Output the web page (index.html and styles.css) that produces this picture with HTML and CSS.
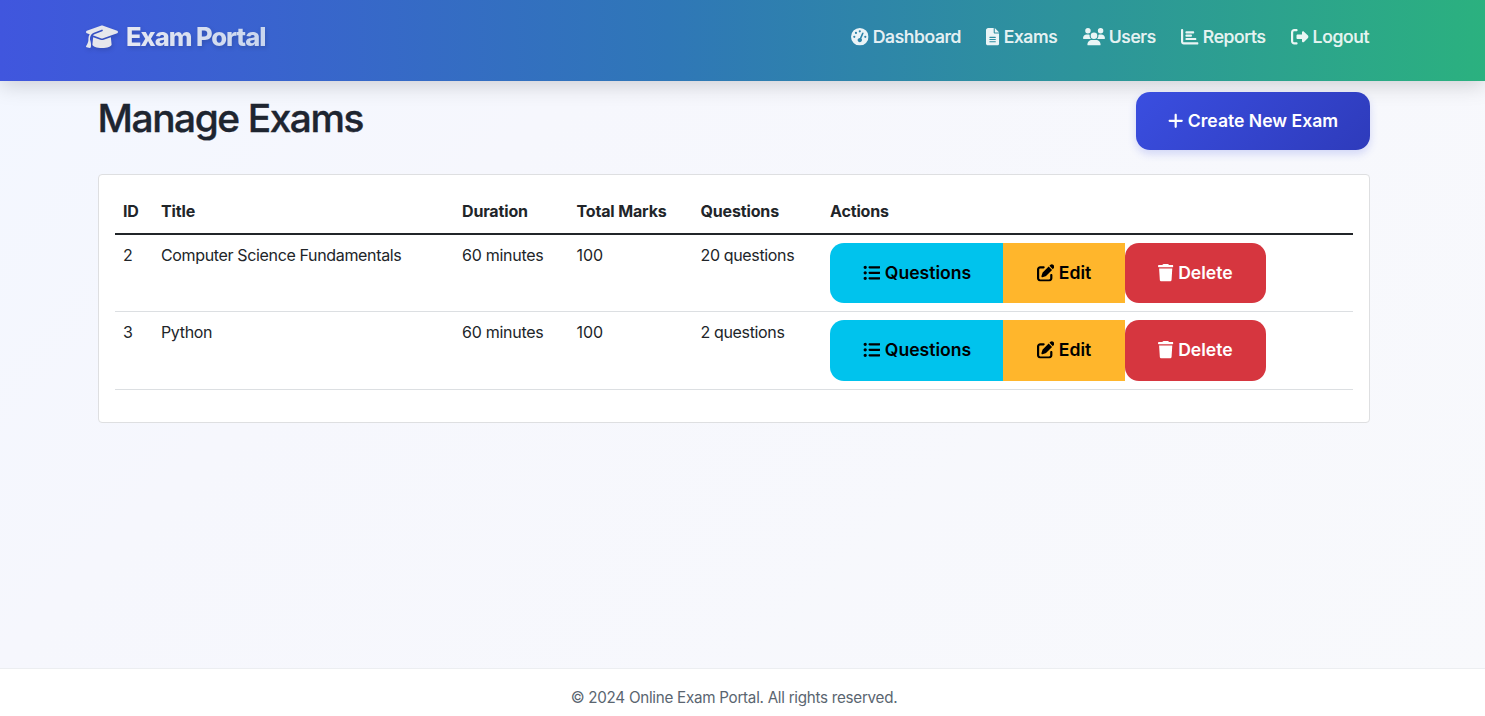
FILE: index.html
```html
<!DOCTYPE html>
<html lang="en">
<head>
<meta charset="utf-8">
<title>Manage Exams</title>
<link rel="stylesheet" href="styles.css">
</head>
<body>
<svg class="sprite" aria-hidden="true">
  <symbol id="cap" viewBox="0 0 640 512"><path d="M320 32c-8.1 0-16.1 1.4-23.7 4.1L15.8 137.4C6.3 140.9 0 149.9 0 160s6.3 19.1 15.8 22.6l57.9 20.9C57.3 229.3 48 259.8 48 291.9v28.1c0 28.4-10.8 57.7-22.3 80.8c-6.5 13-13.9 25.8-22.5 37.6C0 442.7-.9 448.3 .9 453.4s6 8.9 11.2 10.2l64 16c4.2 1.1 8.7 .3 12.4-2s6.3-6.1 7.1-10.4c8.6-42.8 4.3-81.2-2.1-108.7C90.3 344.3 86 329.8 80 316.5V291.9c0-30.2 10.2-58.7 27.9-81.5c12.9-15.5 29.6-28 49.2-35.7l157-61.7c8.2-3.2 17.5 .8 20.7 9s-.8 17.5-9 20.7l-157 61.7c-12.4 4.9-23.3 12.4-32.2 21.6l159.6 57.6c7.6 2.7 15.6 4.1 23.7 4.1s16.1-1.4 23.7-4.1L624.2 182.6c9.5-3.4 15.8-12.5 15.8-22.6s-6.3-19.1-15.8-22.6L343.7 36.1C336.1 33.4 328.1 32 320 32zM128 408c0 35.3 86 72 192 72s192-36.7 192-72L496.7 262.6 354.5 314c-11.1 4-22.8 6-34.5 6s-23.5-2-34.5-6L143.3 262.6 128 408z"/></symbol>
  <symbol id="gauge" viewBox="0 0 512 512"><path fill-rule="evenodd" d="M0 256a256 256 0 1 1 512 0A256 256 0 1 1 0 256zM288 96a32 32 0 1 0 -64 0 32 32 0 1 0 64 0zM256 416c35.3 0 64-28.7 64-64c0-17.4-6.9-33.1-18.1-44.6L366 161.7c5.3-12.1-.2-26.3-12.3-31.6s-26.3 .2-31.6 12.3L257.9 288c-.6 0-1.3 0-1.9 0c-35.3 0-64 28.7-64 64s28.7 64 64 64zM176 144a32 32 0 1 0 -64 0 32 32 0 1 0 64 0zM96 288a32 32 0 1 0 0-64 32 32 0 1 0 0 64zm352-32a32 32 0 1 0 -64 0 32 32 0 1 0 64 0z"/></symbol>
  <symbol id="file" viewBox="0 0 384 512"><path fill-rule="evenodd" d="M64 0C28.7 0 0 28.7 0 64V448c0 35.3 28.7 64 64 64H320c35.3 0 64-28.7 64-64V160H256c-17.7 0-32-14.3-32-32V0H64zM256 0V128H384L256 0zM112 256H272c8.8 0 16 7.2 16 16s-7.2 16-16 16H112c-8.8 0-16-7.2-16-16s7.2-16 16-16zm0 64H272c8.8 0 16 7.2 16 16s-7.2 16-16 16H112c-8.8 0-16-7.2-16-16s7.2-16 16-16zm0 64H272c8.8 0 16 7.2 16 16s-7.2 16-16 16H112c-8.8 0-16-7.2-16-16s7.2-16 16-16z"/></symbol>
  <symbol id="users" viewBox="0 0 640 512"><path d="M144 0a80 80 0 1 1 0 160A80 80 0 1 1 144 0zM512 0a80 80 0 1 1 0 160A80 80 0 1 1 512 0zM0 298.7C0 239.8 47.8 192 106.7 192h42.7c15.9 0 31 3.5 44.6 9.7c-1.3 7.2-1.9 14.7-1.9 22.3c0 38.2 16.8 72.5 43.3 96c-.2 0-.4 0-.7 0H21.3C9.6 320 0 310.4 0 298.7zM405.3 320c-.2 0-.4 0-.7 0c26.6-23.5 43.3-57.8 43.3-96c0-7.6-.7-15-1.9-22.3c13.6-6.3 28.7-9.7 44.6-9.7h42.7C592.2 192 640 239.8 640 298.7c0 11.8-9.6 21.3-21.3 21.3H405.3zM224 224a96 96 0 1 1 192 0 96 96 0 1 1 -192 0zM128 485.3C128 411.7 187.7 352 261.3 352H378.7C452.3 352 512 411.7 512 485.3c0 14.7-11.9 26.7-26.7 26.7H154.7c-14.7 0-26.7-11.9-26.7-26.7z"/></symbol>
  <symbol id="chart" viewBox="0 0 512 512"><path d="M32 32c17.7 0 32 14.3 32 32V400c0 8.8 7.2 16 16 16H480c17.7 0 32 14.3 32 32s-14.3 32-32 32H80c-44.2 0-80-35.8-80-80V64C0 46.3 14.3 32 32 32zm96 96c0-17.7 14.3-32 32-32l192 0c17.7 0 32 14.3 32 32s-14.3 32-32 32l-192 0c-17.7 0-32-14.3-32-32zm32 64H288c17.7 0 32 14.3 32 32s-14.3 32-32 32H160c-17.7 0-32-14.3-32-32s14.3-32 32-32zm0 96H416c17.7 0 32 14.3 32 32s-14.3 32-32 32H160c-17.7 0-32-14.3-32-32s14.3-32 32-32z"/></symbol>
  <symbol id="logout" viewBox="0 0 512 512"><path d="M377.9 105.9L500.7 228.7c7.2 7.2 11.3 17.1 11.3 27.3s-4.1 20.1-11.3 27.3L377.9 406.1c-6.4 6.4-15 9.9-24 9.9c-18.7 0-33.9-15.2-33.9-33.9l0-62.1-128 0c-17.7 0-32-14.3-32-32l0-64c0-17.7 14.3-32 32-32l128 0 0-62.1c0-18.7 15.2-33.9 33.9-33.9c9 0 17.6 3.6 24 9.9zM160 96L96 96c-17.7 0-32 14.3-32 32l0 256c0 17.7 14.3 32 32 32l64 0c17.7 0 32 14.3 32 32s-14.3 32-32 32l-64 0c-53 0-96-43-96-96L0 128C0 75 43 32 96 32l64 0c17.7 0 32 14.3 32 32s-14.3 32-32 32z"/></symbol>
  <symbol id="plus" viewBox="0 0 448 512"><path d="M256 80c0-17.7-14.3-32-32-32s-32 14.3-32 32V224H48c-17.7 0-32 14.3-32 32s14.3 32 32 32H192V432c0 17.7 14.3 32 32 32s32-14.3 32-32V288H400c17.7 0 32-14.3 32-32s-14.3-32-32-32H256V80z"/></symbol>
  <symbol id="list" viewBox="0 0 512 512"><path d="M64 144a48 48 0 1 0 0-96 48 48 0 1 0 0 96zM192 64c-17.7 0-32 14.3-32 32s14.3 32 32 32H480c17.7 0 32-14.3 32-32s-14.3-32-32-32H192zm0 160c-17.7 0-32 14.3-32 32s14.3 32 32 32H480c17.7 0 32-14.3 32-32s-14.3-32-32-32H192zm0 160c-17.7 0-32 14.3-32 32s14.3 32 32 32H480c17.7 0 32-14.3 32-32s-14.3-32-32-32H192zM64 464a48 48 0 1 0 0-96 48 48 0 1 0 0 96zm48-208a48 48 0 1 0 -96 0 48 48 0 1 0 96 0z"/></symbol>
  <symbol id="edit" viewBox="0 0 512 512"><path d="M471.6 21.7c-21.9-21.9-57.3-21.9-79.2 0L362.3 51.7l97.9 97.9 30.1-30.1c21.9-21.9 21.9-57.3 0-79.2L471.6 21.7zm-299.2 220c-6.1 6.1-10.8 13.6-13.5 21.9l-29.6 88.8c-2.9 8.6-.6 18.1 5.8 24.6s15.9 8.7 24.6 5.8l88.8-29.6c8.2-2.7 15.7-7.4 21.9-13.5L437.7 172.3 339.7 74.3 172.4 241.7zM96 64C43 64 0 107 0 160V416c0 53 43 96 96 96H352c53 0 96-43 96-96V320c0-17.7-14.3-32-32-32s-32 14.3-32 32v96c0 17.7-14.3 32-32 32H96c-17.7 0-32-14.3-32-32V160c0-17.7 14.3-32 32-32h96c17.7 0 32-14.3 32-32s-14.3-32-32-32H96z"/></symbol>
  <symbol id="trash" viewBox="0 0 448 512"><path d="M135.2 17.7L128 32H32C14.3 32 0 46.3 0 64S14.3 96 32 96H416c17.7 0 32-14.3 32-32s-14.3-32-32-32H320l-7.2-14.3C307.4 6.8 296.3 0 284.2 0H163.8c-12.1 0-23.2 6.8-28.6 17.7zM416 128H32L53.2 467c1.6 25.3 22.6 45 47.9 45H346.9c25.3 0 46.3-19.7 47.9-45L416 128z"/></symbol>
</svg>

<header class="navbar">
  <a class="brand"><svg class="brand-icon"><use href="#cap"/></svg><span class="brand-name">Exam Portal</span></a>
  <nav class="nav">
    <a class="nav-link"><svg class="icon"><use href="#gauge"/></svg><span>Dashboard</span></a>
    <a class="nav-link"><svg class="icon icon-file"><use href="#file"/></svg><span>Exams</span></a>
    <a class="nav-link"><svg class="icon icon-users"><use href="#users"/></svg><span>Users</span></a>
    <a class="nav-link"><svg class="icon"><use href="#chart"/></svg><span>Reports</span></a>
    <a class="nav-link"><svg class="icon"><use href="#logout"/></svg><span>Logout</span></a>
  </nav>
</header>

<main class="content">
  <div class="page-head">
    <h1 class="page-title">Manage Exams</h1>
    <a class="create-btn"><svg class="icon icon-narrow"><use href="#plus"/></svg><span>Create New Exam</span></a>
  </div>
  <section class="card">
    <table class="exam-table">
      <colgroup><col class="col-id"><col class="col-title"><col class="col-duration"><col class="col-marks"><col class="col-questions"><col></colgroup>
      <thead>
        <tr><th>ID</th><th>Title</th><th>Duration</th><th>Total Marks</th><th>Questions</th><th>Actions</th></tr>
      </thead>
      <tbody>
        <tr>
          <td>2</td><td>Computer Science Fundamentals</td><td class="minutes">60 minutes</td><td class="num">100</td><td>20 questions</td>
          <td><div class="actions">
            <a class="btn btn-questions"><svg class="icon"><use href="#list"/></svg><span>Questions</span></a>
            <a class="btn btn-edit"><svg class="icon"><use href="#edit"/></svg><span>Edit</span></a>
            <a class="btn btn-delete"><svg class="icon icon-narrow"><use href="#trash"/></svg><span>Delete</span></a>
          </div></td>
        </tr>
        <tr>
          <td>3</td><td>Python</td><td class="minutes">60 minutes</td><td class="num">100</td><td>2 questions</td>
          <td><div class="actions">
            <a class="btn btn-questions"><svg class="icon"><use href="#list"/></svg><span>Questions</span></a>
            <a class="btn btn-edit"><svg class="icon"><use href="#edit"/></svg><span>Edit</span></a>
            <a class="btn btn-delete"><svg class="icon icon-narrow"><use href="#trash"/></svg><span>Delete</span></a>
          </div></td>
        </tr>
      </tbody>
    </table>
  </section>
</main>

<footer class="footer"><p class="footer-text">© 2024 Online Exam Portal. All rights reserved.</p></footer>
</body>
</html>
```
FILE: styles.css
```css
* { box-sizing: border-box; }

body {
  margin: 0;
  height: 716px;
  display: flex;
  flex-direction: column;
  overflow: hidden;
  font-family: Inter, "Liberation Sans", sans-serif;
  font-size: 16px;
  line-height: 24px;
  color: #212529;
  background: linear-gradient(135deg, #f3f7ff 0%, #f6f7fd 30%, #f8f9fc 100%);
}

.sprite { display: none; }

.icon { width: 17.6px; height: 17.6px; fill: currentColor; flex: none; }
.icon-file { width: 13.2px; }
.icon-users { width: 22px; }
.icon-narrow { width: 15.4px; }

.navbar {
  height: 81px;
  flex: none;
  display: flex;
  justify-content: space-between;
  align-items: flex-start;
  padding: 21px 116px 0 86px;
  background: linear-gradient(90deg, #4056de 0%, #2f77b7 45%, #2bb17f 100%);
  box-shadow: 0 4px 20px rgba(0, 0, 0, 0.17);
}

.brand { display: flex; align-items: center; gap: 8px; height: 32px; filter: drop-shadow(1px 2px 2px rgba(0, 0, 0, 0.15)); }
.brand-icon { width: 32px; height: 25.6px; fill: #e6e7ec; }
.brand-name {
  font-size: 25.6px;
  font-weight: 800;
  letter-spacing: -1.05px;
  line-height: 32px;
  white-space: nowrap;
  color: transparent;
  background: linear-gradient(90deg, #e6e8f2, #c9d6ee);
  -webkit-background-clip: text;
  background-clip: text;
}

.nav { display: flex; gap: 25.4px; height: 32px; align-items: center; }
.nav-link { display: flex; align-items: center; gap: 4px; font-size: 17.6px; font-weight: 500; letter-spacing: -0.38px; color: rgba(255, 255, 255, 0.9); -webkit-text-stroke: 0.2px rgba(255, 255, 255, 0.9); }

.content { flex: 1; width: 1272px; margin-left: 98px; padding-top: 11px; }
.page-head { display: flex; justify-content: space-between; align-items: flex-start; height: 82px; }
.page-title { margin: 2px 0 0 -0.5px; font-size: 38.8px; line-height: 48px; font-weight: 500; letter-spacing: -1.4px; color: #1e2530; -webkit-text-stroke: 0.4px #1e2530; }
.create-btn {
  width: 234px; height: 58px;
  display: flex; align-items: center; justify-content: center; gap: 4.5px;
  border-radius: 14px;
  color: #fff; font-size: 17.6px; font-weight: 600;
  background: linear-gradient(135deg, #3a4ee0 0%, #2e3bbb 100%);
  box-shadow: 0 4px 8px rgba(58, 78, 224, 0.2);
}

.card { height: 249px; padding: 16px; background: #fff; border: 1px solid #dedfe1; border-radius: 4px; }
.exam-table { width: 100%; table-layout: fixed; border-collapse: collapse; }
.exam-table th, .exam-table td { text-align: left; vertical-align: top; padding: 8px; white-space: nowrap; }
.exam-table th { height: 43px; font-weight: 700; letter-spacing: -0.15px; border-bottom: 2px solid #212529; }
.exam-table td { height: 77px; letter-spacing: -0.35px; border-bottom: 1px solid #dcdfe2; }
.exam-table tr:last-child td { height: 78px; }
.exam-table td.num { letter-spacing: 0; }
.exam-table td.minutes { letter-spacing: -0.27px; }
.col-id { width: 38px; }
.col-title { width: 301px; }
.col-duration { width: 114.5px; }
.col-marks { width: 124px; }
.col-questions { width: 129.5px; }

.actions { display: flex; }
.btn { height: 60px; display: flex; align-items: center; justify-content: center; gap: 4.5px; font-size: 17.6px; font-weight: 600; letter-spacing: 0; color: #000; }
.exam-table tr:last-child .btn { height: 61px; padding-bottom: 1px; }
.btn-questions { width: 173px; padding-left: 1px; background: #00c3ed; border-radius: 14px 0 0 14px; }
.btn-edit { width: 122px; background: #ffb62c; }
.btn-delete { width: 141px; background: #d6363f; color: #fff; border-radius: 14px; }

.footer { height: 48px; flex: none; padding: 17px 17px 0 0; text-align: center; background: #fff; border-top: 1px solid #eceef1; }
.footer-text { margin: 0; font-size: 15.2px; letter-spacing: -0.27px; color: #5a6570; }
```
